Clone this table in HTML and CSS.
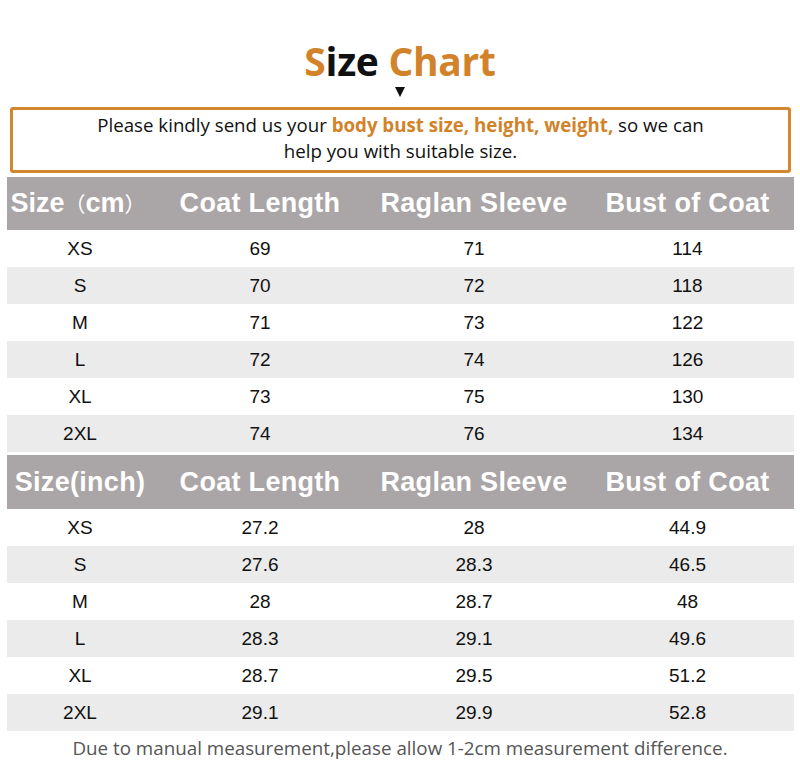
FILE: index.html
```html
<!DOCTYPE html>
<html>
<head>
<meta charset="utf-8">
<link rel="stylesheet" href="styles.css">
</head>
<body>
<div class="page">
  <h1 class="title"><span class="acc">S</span>ize <span class="acc">Chart</span></h1>
  <div class="arrow"></div>
  <div class="notice">
    <p>Please kindly send us your <b class="acc">body bust size, height, weight,</b> so we can</p>
    <p>help you with suitable size.</p>
  </div>
  <div class="table">
    <div class="row head"><div class="first">Size<span class="cjk">（</span>cm<span class="cjk">）</span></div><div>Coat Length</div><div>Raglan Sleeve</div><div>Bust of Coat</div></div>
    <div class="row"><div>XS</div><div>69</div><div>71</div><div>114</div></div>
    <div class="row alt"><div>S</div><div>70</div><div>72</div><div>118</div></div>
    <div class="row"><div>M</div><div>71</div><div>73</div><div>122</div></div>
    <div class="row alt"><div>L</div><div>72</div><div>74</div><div>126</div></div>
    <div class="row"><div>XL</div><div>73</div><div>75</div><div>130</div></div>
    <div class="row alt"><div>2XL</div><div>74</div><div>76</div><div>134</div></div>
  </div>
  <div class="table second">
    <div class="row head"><div>Size(inch)</div><div>Coat Length</div><div>Raglan Sleeve</div><div>Bust of Coat</div></div>
    <div class="row"><div>XS</div><div>27.2</div><div>28</div><div>44.9</div></div>
    <div class="row alt"><div>S</div><div>27.6</div><div>28.3</div><div>46.5</div></div>
    <div class="row"><div>M</div><div>28</div><div>28.7</div><div>48</div></div>
    <div class="row alt"><div>L</div><div>28.3</div><div>29.1</div><div>49.6</div></div>
    <div class="row"><div>XL</div><div>28.7</div><div>29.5</div><div>51.2</div></div>
    <div class="row alt"><div>2XL</div><div>29.1</div><div>29.9</div><div>52.8</div></div>
  </div>
  <p class="foot">Due to manual measurement,please allow 1-2cm measurement difference.</p>
</div>
</body>
</html>
```
FILE: styles.css
```css
html, body {
  margin: 0;
  padding: 0;
  background: #fff;
}
.page {
  width: 800px;
  padding-top: 41px;
  display: flex;
  flex-direction: column;
  align-items: stretch;
}
.title {
  margin: 0;
  text-align: center;
  font-family: "Open Sans", sans-serif;
  font-weight: 700;
  font-size: 39px;
  line-height: 40px;
  color: #111;
  letter-spacing: -0.3px;
}
.acc {
  color: #d2832a;
}
.arrow {
  align-self: center;
  margin-top: 6px;
  width: 0;
  height: 0;
  border-left: 5px solid transparent;
  border-right: 5px solid transparent;
  border-top: 10px solid #111;
}
.notice {
  margin: 10px 9px 0 10px;
  border: 3px solid #d4862c;
  border-radius: 3px;
  padding-top: 2px;
  box-sizing: content-box;
  height: 58px;
  text-align: center;
  font-family: "Open Sans", sans-serif;
  font-size: 18.7px;
  line-height: 26px;
  color: #111;
  white-space: nowrap;
}
.notice p {
  margin: 0;
}
.notice b {
  font-weight: 700;
}
.table {
  margin: 4px 6px 0 7px;
  display: flex;
  flex-direction: column;
  font-family: "Liberation Sans", Arial, sans-serif;
}
.table.second {
  margin-top: 3px;
}
.row {
  display: grid;
  grid-template-columns: 146px 214px 214px 1fr;
  height: 37px;
  align-items: center;
  text-align: center;
  font-size: 19px;
  color: #111;
  white-space: nowrap;
}
.row.alt {
  background: #ebebeb;
}
.row.head {
  height: 53px;
  background: #aaa5a6;
  color: #fff;
  font-weight: 700;
  font-size: 27px;
  letter-spacing: 0.3px;
}
.row.head .first {
  letter-spacing: 0;
  padding-right: 4px;
}
.second .row.head {
  height: 54px;
}
.cjk {
  font-family: "Noto Sans CJK SC", sans-serif;
  font-weight: 400;
  font-size: 21px;
  letter-spacing: 0;
  line-height: 1;
}
.foot {
  margin: 4px 0 0 0;
  text-align: center;
  font-family: "Open Sans", sans-serif;
  font-size: 18.8px;
  line-height: 26px;
  color: #555;
  white-space: nowrap;
}
```
